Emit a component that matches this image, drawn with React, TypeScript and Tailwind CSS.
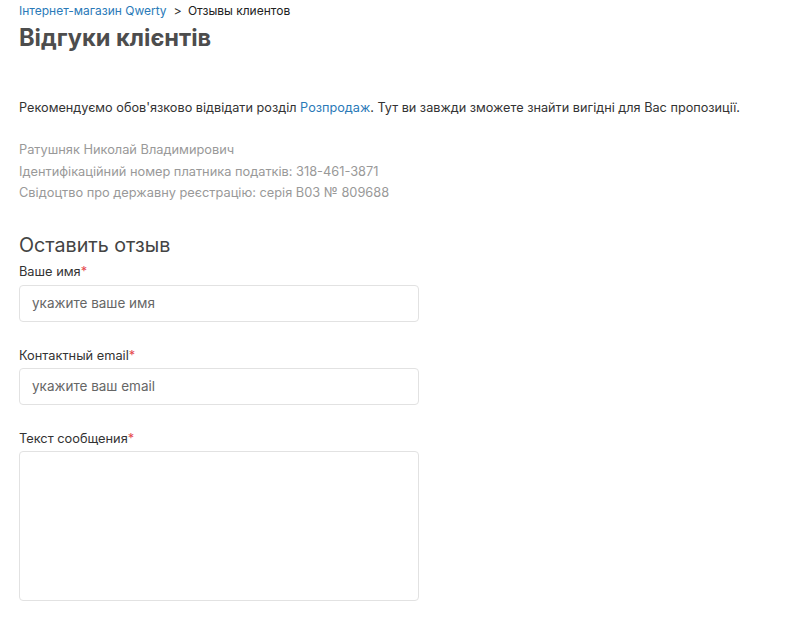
import React from "react";

export default function App() {
  return (
    <div className="min-h-[627px] bg-white px-[19px] text-[12.8px] text-[#333]" style={{ fontFamily: "Inter, 'Noto Sans', sans-serif" }}>
      <div className="flex items-center h-[22px] text-[12px]">
        <a className="text-[#2a7ab8]">Інтернет-магазин Qwerty</a>
        <span className="ml-[7px] mr-[6px] text-[#333] text-[12.5px]">&gt;</span>
        <span className="text-[#222]">Отзывы клиентов</span>
      </div>
      <h1 className="text-[23.6px] font-bold text-[#4d4d4d] leading-[32px]">Відгуки клієнтів</h1>
      <p className="mt-[44px] leading-[20px] text-[12.7px]">
        Рекомендуємо обов'язково відвідати розділ <a className="text-[#2a7ab8]">Розпродаж</a>. Тут ви завжди зможете знайти вигідні для Вас пропозиції.
      </p>
      <div className="mt-[21px] text-[#999] leading-[21.5px]">
        <div>Ратушняк Николай Владимирович</div>
        <div>Ідентифікаційний номер платника податків: 318-461-3871</div>
        <div>Свідоцтво про державну реєстрацію: серія В03 № 809688</div>
      </div>
      <h2 className="mt-[27px] text-[19.7px] text-[#444] leading-[28px]">Оставить отзыв</h2>
      <div className="mt-[3px] w-[400px]">
        <label className="block leading-[20px] text-[#333]">Ваше имя<span className="text-[#e5484d]">*</span></label>
        <div className="mt-[3px] h-[37px] border border-[#e2e2e2] rounded-[4px] flex items-center px-[12px] text-[13.5px] text-[#666]">укажите ваше имя</div>
        <label className="block mt-[24px] leading-[20px] text-[#333]">Контактный email<span className="text-[#e5484d]">*</span></label>
        <div className="mt-[2px] h-[37px] border border-[#e2e2e2] rounded-[4px] flex items-center px-[12px] text-[13.5px] text-[#666]">укажите ваш email</div>
        <label className="block mt-[24px] leading-[20px] text-[#333]">Текст сообщения<span className="text-[#e5484d]">*</span></label>
        <div className="mt-[2px] h-[150px] border border-[#e2e2e2] rounded-[4px]"></div>
      </div>
    </div>
  );
}
